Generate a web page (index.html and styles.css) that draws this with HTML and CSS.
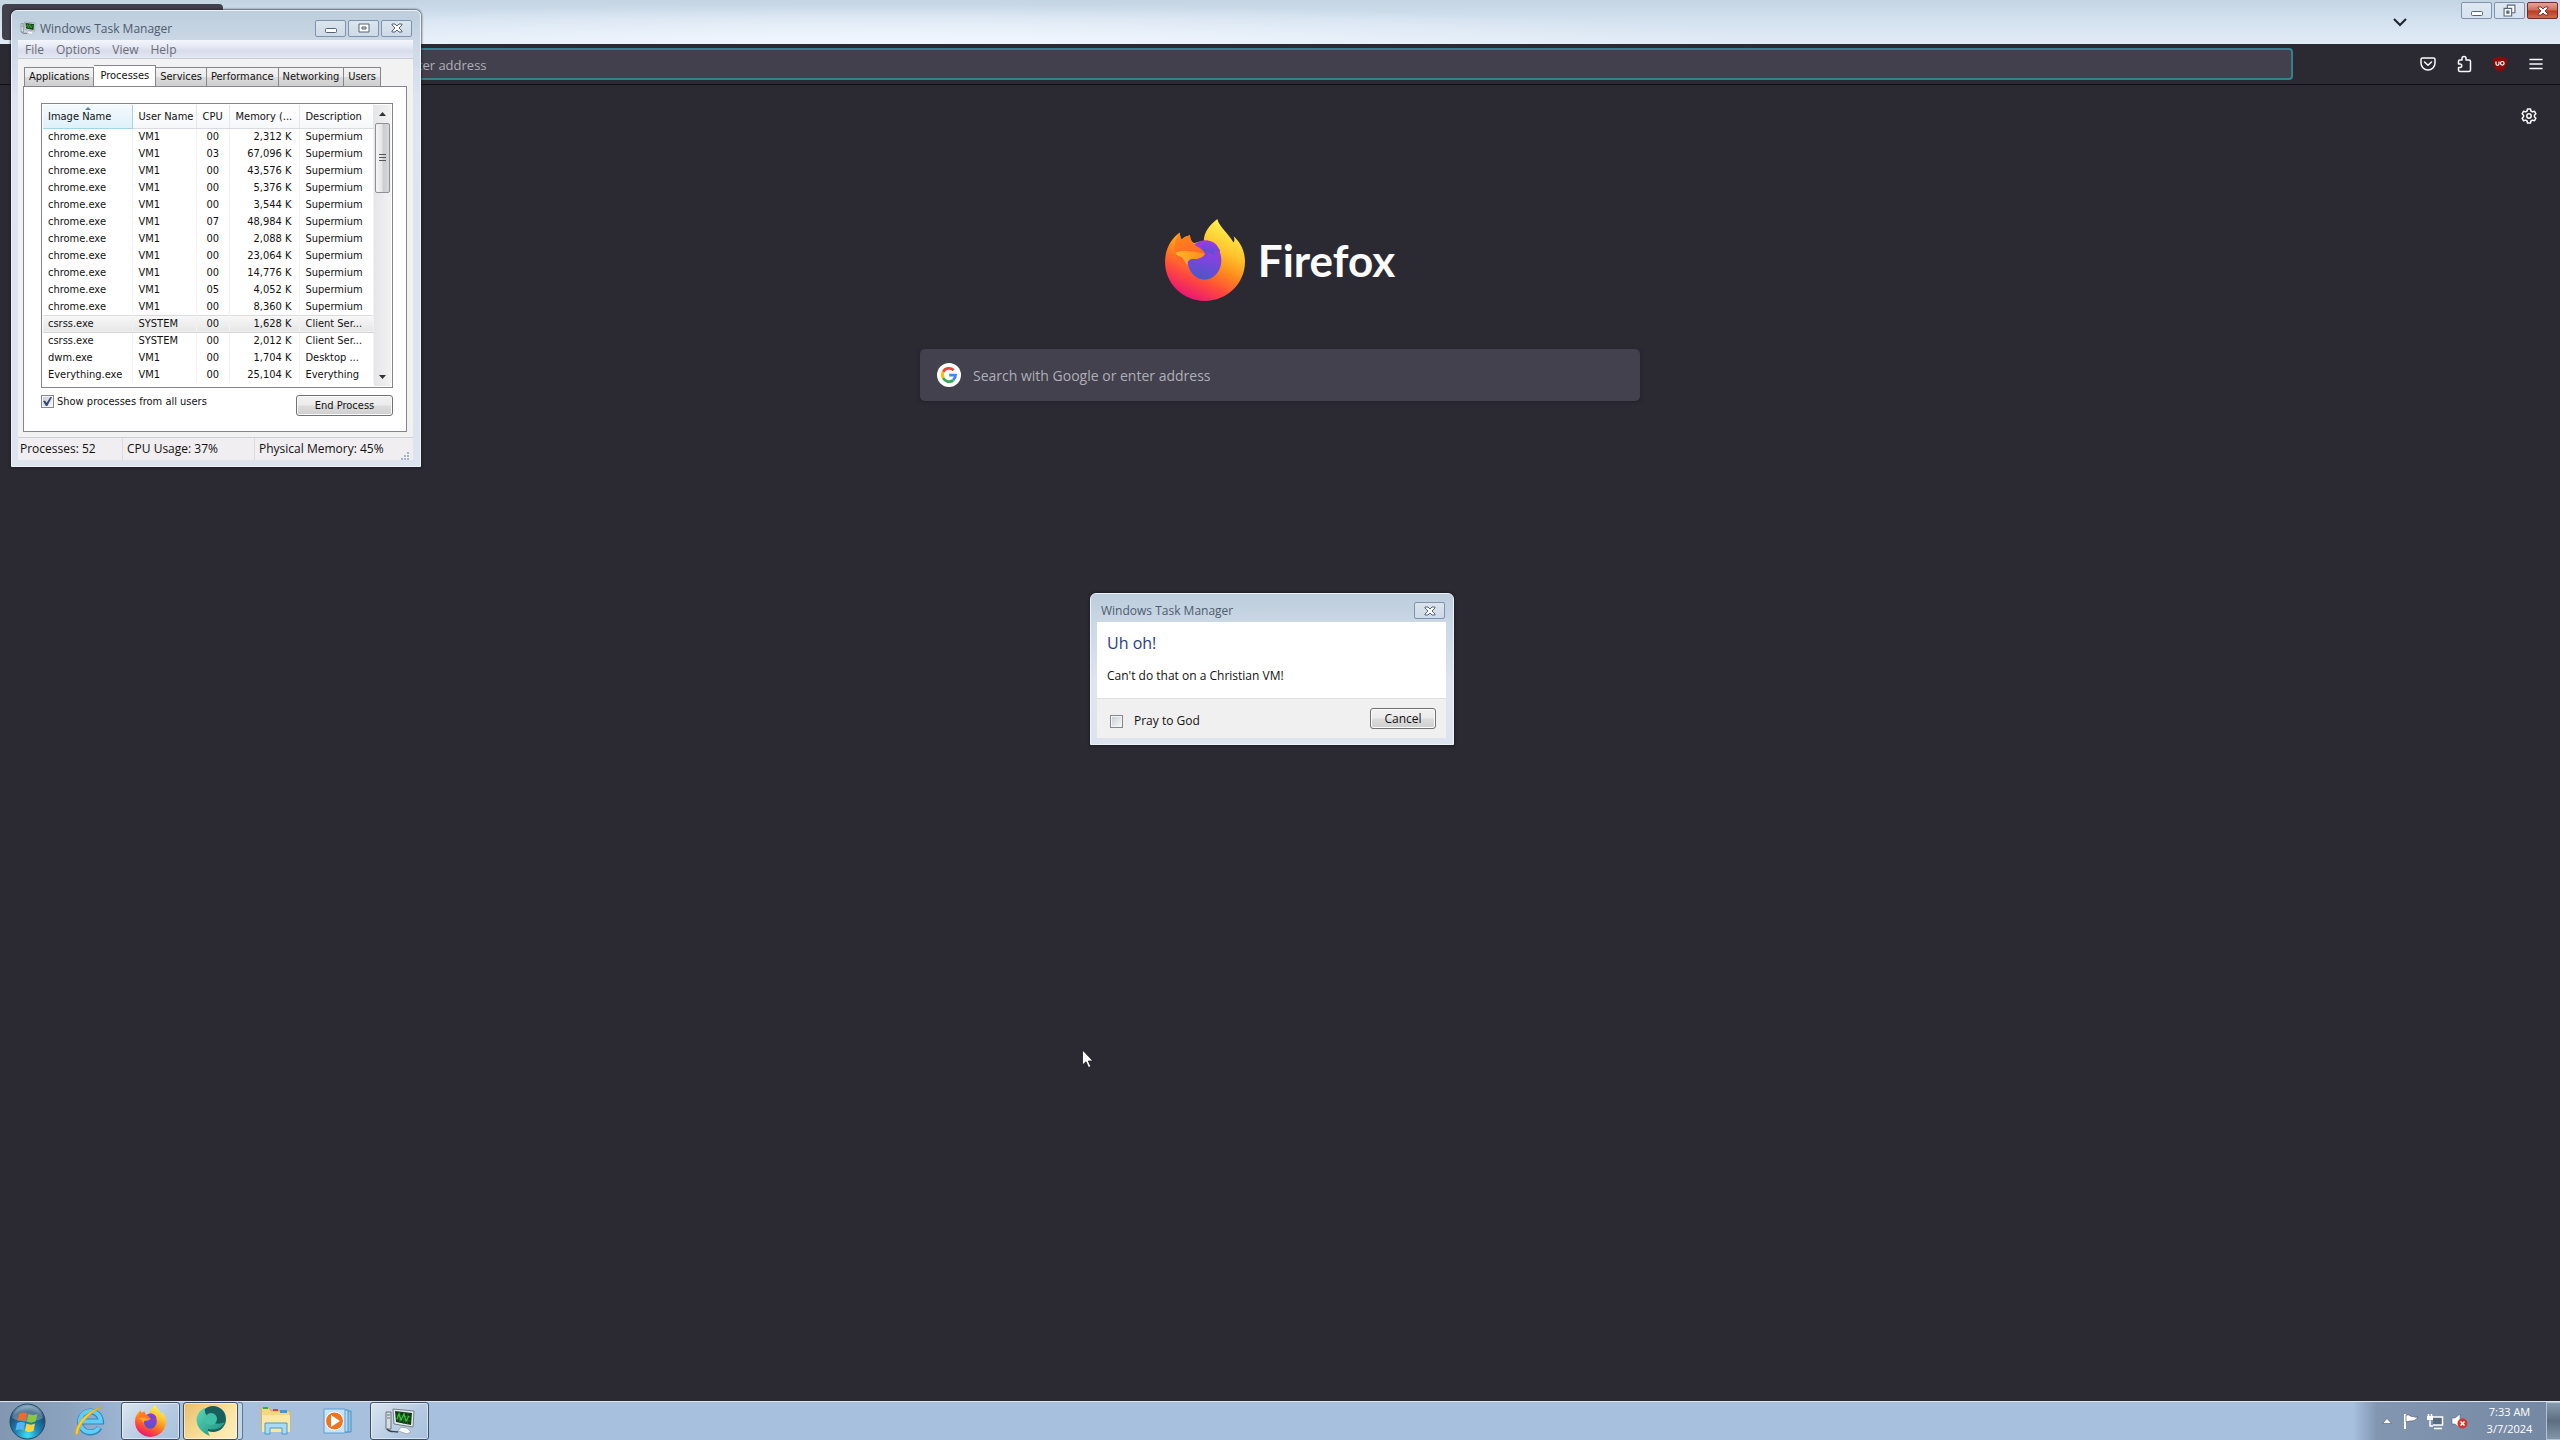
FILE: index.html
```html
<!DOCTYPE html>
<html lang="en">
<head>
<meta charset="utf-8">
<title>Desktop</title>
<link rel="stylesheet" href="styles.css">
</head>
<body>
<svg class="defs" aria-hidden="true">
  <defs>
    <linearGradient id="ff-body" x1=".75" y1=".05" x2=".3" y2="1">
      <stop offset="0" stop-color="#fff44f"/><stop offset=".3" stop-color="#ffc22c"/><stop offset=".52" stop-color="#ff8a1c"/><stop offset=".74" stop-color="#ff4a3c"/><stop offset="1" stop-color="#e8107a"/>
    </linearGradient>
    <linearGradient id="ff-globe" x1=".6" y1="0" x2=".4" y2="1">
      <stop offset="0" stop-color="#a63ad8"/><stop offset=".5" stop-color="#7a45dd"/><stop offset="1" stop-color="#4a58c4"/>
    </linearGradient>
    <linearGradient id="ff-head" x1="0" y1="0" x2=".3" y2="1">
      <stop offset="0" stop-color="#ff8a16"/><stop offset="1" stop-color="#ff5f2c"/>
    </linearGradient>
    <linearGradient id="ff-snout" x1="0" y1="0" x2="1" y2="0">
      <stop offset="0" stop-color="#ffb52b"/><stop offset="1" stop-color="#ff8c1a"/>
    </linearGradient>
    <radialGradient id="orb" cx=".5" cy=".9" r=".9">
      <stop offset="0" stop-color="#3fe0f4"/><stop offset=".4" stop-color="#1b7fb4"/><stop offset=".75" stop-color="#1c4c74"/><stop offset="1" stop-color="#8fb0c8"/>
    </radialGradient>
    <linearGradient id="teal" x1="0" y1="0" x2="1" y2="1">
      <stop offset="0" stop-color="#5fd8b8"/><stop offset="1" stop-color="#178c7c"/>
    </linearGradient>
    <symbol id="firefox" viewBox="0 0 237 243">
      <path fill="url(#ff-body)" d="M115 68C114 38 133 18 155 0C162 26 188 42 203 70C207 64 206 57 203 51C226 70 237 98 237 127C237 192 184 243 118 243C53 243 0 192 0 127C0 93 15 60 44 40C44 49 46 55 49 61C56 54 64 50 74 48C74 59 79 68 86 72C94 68 104 66 115 68Z"/>
      <ellipse cx="117" cy="122" rx="50" ry="58" fill="url(#ff-globe)"/>
      <path fill="url(#ff-globe)" d="M112 65C130 61 151 69 157 84C162 91 164 94 163 98C151 90 144 94 148 106L108 92Z"/>
      <path fill="url(#ff-head)" d="M44 40C44 49 46 55 49 61C56 54 64 50 74 48C74 62 82 75 97 82C107 88 116 94 118 103C113 115 95 120 81 118C68 121 65 128 68 140C55 136 28 120 30 104C25 90 28 60 44 40Z"/>
      <path fill="url(#ff-snout)" d="M31 100C49 91 84 95 118 103C113 115 95 120 81 118C68 121 65 128 67 138C58 130 57 118 47 112C41 110 33 106 31 100Z"/>
    </symbol>
    <symbol id="monitor" viewBox="0 0 32 28">
      <path d="M2 5h5v17H2z" fill="#d7dde0" stroke="#66757c"/>
      <path d="M3 8h3M3 11h3" stroke="#66757c"/>
      <path d="M9 2l21 2-1 16-19-3z" fill="#e7ecee" stroke="#707d84"/>
      <path d="M11 4l17 2-1 12-15-3z" fill="#123a16"/>
      <path d="M12 8l15 2M12 12l15 2M16 5l-.500 11M20 6l-.500 11M24 6l-.500 11" fill="none" stroke="#23702a" stroke-width=".8"/>
      <path d="M13 12l2-5 2 6 3-6 2 7 3-5" fill="none" stroke="#3ec03b" stroke-width="1.300"/>
      <path d="M17 20l6 1 4 4-4 2-9-3z" fill="#f4f6f7" stroke="#a4adb2"/>
      <path d="M3 22c3 4 7 2 11 3" fill="none" stroke="#39434a" stroke-width="1.3"/>
    </symbol>
    <symbol id="win-close" viewBox="0 0 12 10">
      <path d="M1 1h3l2 2 2-2h3v1L8 5l3 3v1H8L6 7 4 9H1V8l3-3-3-3z" fill="#fff" stroke="currentColor"/>
    </symbol>
    <symbol id="win-min" viewBox="0 0 12 10">
      <rect x=".5" y="5.500" width="11" height="4" rx="1" fill="#fff" stroke="currentColor"/>
    </symbol>
    <symbol id="win-max" viewBox="0 0 12 10">
      <path d="M1 1h10v8H1zM4 4h4v2H4z" fill="#fff" fill-rule="evenodd" stroke="currentColor"/>
    </symbol>
    <symbol id="win-restore" viewBox="0 0 12 12">
      <path d="M4 1h7v7H4z" fill="#fff" stroke="currentColor"/>
      <path d="M1 4h7v7H1zM3.500 6.500h2v2h-2z" fill="#fff" fill-rule="evenodd" stroke="currentColor"/>
    </symbol>
  </defs>
</svg>

<div class="desktop">
  <main class="browser">
    <div class="titlebar">
      <button class="tab-current" aria-label="New Tab"></button>
      <button class="list-tabs" aria-label="List all tabs"><svg width="14" height="9" viewBox="0 0 14 9"><path d="M1 1l6 6 6-6" fill="none" stroke="#1d2430" stroke-width="2"/></svg></button>
      <div class="caption-buttons">
        <button class="caption" aria-label="Minimize"><svg width="12" height="10"><use href="#win-min"/></svg></button>
        <button class="caption" aria-label="Restore"><svg width="13" height="13"><use href="#win-restore"/></svg></button>
        <button class="caption caption-close" aria-label="Close"><svg width="12" height="10"><use href="#win-close"/></svg></button>
      </div>
    </div>
    <div class="toolbar">
      <input class="urlbar" type="text" aria-label="Address" placeholder="Search with Google or enter address">
      <div class="toolbar-actions">
        <button class="tool" aria-label="Save to Pocket"><svg width="16" height="16" viewBox="0 0 16 16" fill="none" stroke="#fbfbfe" stroke-width="1.500" stroke-linecap="round" stroke-linejoin="round"><path d="M2.500 2h11A1.500 1.500 0 0 1 15 3.500V7A7 7 0 0 1 1 7V3.500A1.500 1.500 0 0 1 2.500 2zM4.500 6L8 9.300 11.500 6"/></svg></button>
        <button class="tool" aria-label="Extensions"><svg width="16" height="18" viewBox="0 0 16 18" fill="none" stroke="#fbfbfe" stroke-width="1.500" stroke-linejoin="round"><path d="M6 5V3.500a2 2 0 0 1 4 0V5h3a1.500 1.500 0 0 1 1.500 1.500V15a1.500 1.500 0 0 1-1.500 1.500H4A1.500 1.500 0 0 1 2.500 15v-2.500H4a1.700 1.700 0 0 0 0-3.500H2.500V6.500A1.500 1.500 0 0 1 4 5z"/></svg></button>
        <button class="tool" aria-label="uBlock Origin"><svg width="16" height="16" viewBox="0 0 16 16"><path d="M8 0c2 1.500 4.500 2 7 2 0 6 0 10-7 14C1 12 1 8 1 2c2.500 0 5-.500 7-2z" fill="#8c0a0a"/><path d="M4 5.500v2.300a1.500 1.500 0 0 0 3 0V5.500" fill="none" stroke="#fff" stroke-width="1.200"/><circle cx="10.300" cy="7.300" r="1.800" fill="none" stroke="#fff" stroke-width="1.200"/></svg></button>
        <button class="tool" aria-label="Menu"><svg width="14" height="12" viewBox="0 0 14 12" stroke="#fbfbfe" stroke-width="1.500" stroke-linecap="round"><path d="M1 1.500h12M1 6h12M1 10.500h12"/></svg></button>
      </div>
    </div>
    <section class="newtab">
      <button class="tool customize" aria-label="Customize"><svg width="16" height="16" viewBox="0 0 16 16" fill="none" stroke="#fbfbfe" stroke-width="1.500" stroke-linejoin="round"><path d="M6.500 1h3l.400 2 1.500.900 2-.700 1.500 2.600L13.400 7.200v1.600l1.500 1.400-1.500 2.600-2-.700-1.500.900-.400 2h-3l-.400-2-1.500-.900-2 .700-1.500-2.600 1.500-1.400V7.200L1.100 5.800l1.500-2.600 2 .700L6.100 3z"/><circle cx="8" cy="8" r="2.200"/></svg></button>
      <div class="brand">
        <svg width="80" height="82"><use href="#firefox"/></svg>
        <h1 class="wordmark">Firefox</h1>
      </div>
      <label class="search">
        <svg width="24" height="24" viewBox="0 0 24 24"><circle cx="12" cy="12" r="12" fill="#fff"/><g fill="none" stroke-width="2.800"><path d="M16.600 7.200A6.600 6.600 0 0 0 6.200 8.800" stroke="#ea4335"/><path d="M6.200 8.800a6.600 6.600 0 0 0 0 6.400" stroke="#fbbc05"/><path d="M6.200 15.200a6.600 6.600 0 0 0 10 1.900" stroke="#34a853"/><path d="M16.200 17.100A6.600 6.600 0 0 0 18.500 12.100H12.200" stroke="#4285f4"/></g></svg>
        <input class="search-input" type="text" aria-label="Search" placeholder="Search with Google or enter address">
      </label>
    </section>
  </main>

  <footer class="taskbar">
    <nav class="launchers">
      <button class="launch start" aria-label="Start"><svg width="37" height="37" viewBox="0 0 37 37"><circle cx="18.500" cy="18.500" r="17.500" fill="url(#orb)" stroke="#25455e"/><path d="M3 15a16 16 0 0 1 31 0c-9 5-21 5-31 0z" fill="#fff" opacity=".25"/><path d="M10 11c3-2 6-2 8-.500l-1.500 7.500c-3-1.500-5-1.500-8 0z" fill="#f06a28"/><path d="M19.500 11c3 1.500 5 1.500 9 0L26.500 18.500c-3 1.500-6 1.500-8.500 0z" fill="#8cc63e"/><path d="M8 20c3-1.500 5-1.500 8 0l-1.500 7.500c-3-1.500-5-1.500-8 0z" fill="#54b4f0"/><path d="M17.500 20.500c3 1.500 6 1.500 8.500 0L24.500 28c-3 1.500-6 1.500-8.500 0z" fill="#fcd53c"/></svg></button>
      <button class="launch" aria-label="Internet Explorer"><svg width="32" height="32" viewBox="0 0 32 32"><path d="M26.500 22.500a10.500 10.500 0 1 1 1.500-6H9.500" fill="none" stroke="#2a86c4" stroke-width="6"/><path d="M26 22.500a10.500 10.500 0 1 1 1.800-6H10" fill="none" stroke="#62cdf3" stroke-width="4"/><path d="M3 30C0 22 14 4 30 2c-11 4-24 16-25 27z" fill="#f8cf3a" stroke="#d9a520" stroke-width=".8"/></svg></button>
      <button class="launch running" aria-label="Firefox"><svg width="31" height="32"><use href="#firefox"/></svg></button>
      <button class="launch running attention" aria-label="Supermium"><svg width="34" height="32" viewBox="0 0 34 32"><circle cx="19" cy="14" r="13" fill="#17605e"/><path d="M11 3C0 7-2 24 16 31c-2-3-2-5-2-7 8 2 14-1 17-7-6 3-12 2-16-3-3-4-5-7-4-11z" fill="url(#teal)"/><circle cx="17" cy="14" r="6" fill="#3fbfa6"/></svg></button>
      <span class="stack-edge"></span>
      <button class="launch" aria-label="Windows Explorer"><svg width="32" height="30" viewBox="0 0 32 30"><path d="M1 2h8l2 3h19v20H2z" fill="#f4d780" stroke="#d8b04c"/><path d="M3 1h5v2H3z" fill="#3faa3c"/><path d="M13 3h5v2h-5z" fill="#c94a3a"/><path d="M20 4h7v3h-7z" fill="#4c93d6"/><path d="M2 9h28v17H2z" fill="#fae9a4"/><path d="M5 28V17h22v11h-5v-6H10v6z" fill="#a9dbf5" stroke="#4b9ccb"/></svg></button>
      <button class="launch" aria-label="Windows Media Player"><svg width="30" height="26" viewBox="0 0 30 26"><path d="M7 3h21v21H7z" fill="#8ec4ea" stroke="#4a91c6"/><path d="M4 2h21v22H4z" fill="#b9dcf4" stroke="#4a91c6"/><path d="M1 1h21v24H1z" fill="#c9e3f5" stroke="#5aa0d0"/><circle cx="11.500" cy="13" r="9" fill="#ee7420" stroke="#fff"/><path d="M8 7l9 6-9 6z" fill="#fff"/></svg></button>
      <button class="launch running" aria-label="Windows Task Manager"><svg width="32" height="28"><use href="#monitor"/></svg></button>
    </nav>
    <div class="tray">
      <button class="tray-icon" aria-label="Show hidden icons"><svg width="10" height="6" viewBox="0 0 10 6"><path d="M5 .500L9.500 5.500h-9z" fill="#fff" stroke="#4b5b70" stroke-width=".6"/></svg></button>
      <button class="tray-icon" aria-label="Action Center"><svg width="16" height="16" viewBox="0 0 16 16"><path d="M2 1v15" stroke="#fff" stroke-width="2"/><path d="M3 2c4-1 4 2 7 1.500 1 0 1 1 5 .500-2 3-4 4-6 4-2 0-3 0-6 1z" fill="#fff" stroke="#3c4a5e" stroke-width=".6"/></svg></button>
      <button class="tray-icon" aria-label="Network"><svg width="17" height="17" viewBox="0 0 17 17"><path d="M6 4h9.500v8H6" fill="#566a84" stroke="#fff" stroke-width="1.500"/><path d="M7 15.500h8M3 8v5h3M1.500 1v3M4.500 1v3" fill="none" stroke="#fff" stroke-width="1.500"/><path d="M0 3h6v4H4L3 8 2 7H0z" fill="#fff"/></svg></button>
      <button class="tray-icon" aria-label="Volume muted"><svg width="17" height="16" viewBox="0 0 17 16"><path d="M1 5h3l5-4v14l-5-4H1z" fill="#fff" stroke="#5a6676" stroke-width=".6"/><circle cx="11.500" cy="10.500" r="5" fill="#d2352c"/><path d="M9.500 8.500l4 4m0-4l-4 4" stroke="#fff" stroke-width="1.500"/></svg></button>
      <div class="clock"><time>7:33 AM</time><time>3/7/2024</time></div>
      <button class="show-desktop" aria-label="Show desktop"></button>
    </div>
  </footer>

  <section class="window task-manager" aria-label="Windows Task Manager">
    <header class="window-title">
      <svg width="16" height="14"><use href="#monitor"/></svg>
      <h2 class="window-name">Windows Task Manager</h2>
      <div class="caption-buttons">
        <button class="caption" aria-label="Minimize"><svg width="12" height="10"><use href="#win-min"/></svg></button>
        <button class="caption" aria-label="Maximize"><svg width="12" height="10"><use href="#win-max"/></svg></button>
        <button class="caption" aria-label="Close"><svg width="12" height="10"><use href="#win-close"/></svg></button>
      </div>
    </header>
    <div class="tm-body">
      <nav class="menu">
        <button class="menu-item">File</button>
        <button class="menu-item">Options</button>
        <button class="menu-item">View</button>
        <button class="menu-item">Help</button>
      </nav>
      <div class="tabs" role="tablist">
        <button class="tab" role="tab">Applications</button>
        <button class="tab selected" role="tab" aria-selected="true">Processes</button>
        <button class="tab" role="tab">Services</button>
        <button class="tab" role="tab">Performance</button>
        <button class="tab" role="tab">Networking</button>
        <button class="tab" role="tab">Users</button>
      </div>
      <div class="panel">
        <div class="list">
          <table class="processes">
            <colgroup><col class="col-image"><col class="col-user"><col class="col-cpu"><col class="col-memory"><col class="col-description"></colgroup>
            <thead><tr><th class="sorted">Image Name</th><th>User Name</th><th>CPU</th><th>Memory (...</th><th>Description</th></tr></thead>
            <tbody>
              <tr><td>chrome.exe</td><td>VM1</td><td>00</td><td>2,312 K</td><td>Supermium</td></tr>
              <tr><td>chrome.exe</td><td>VM1</td><td>03</td><td>67,096 K</td><td>Supermium</td></tr>
              <tr><td>chrome.exe</td><td>VM1</td><td>00</td><td>43,576 K</td><td>Supermium</td></tr>
              <tr><td>chrome.exe</td><td>VM1</td><td>00</td><td>5,376 K</td><td>Supermium</td></tr>
              <tr><td>chrome.exe</td><td>VM1</td><td>00</td><td>3,544 K</td><td>Supermium</td></tr>
              <tr><td>chrome.exe</td><td>VM1</td><td>07</td><td>48,984 K</td><td>Supermium</td></tr>
              <tr><td>chrome.exe</td><td>VM1</td><td>00</td><td>2,088 K</td><td>Supermium</td></tr>
              <tr><td>chrome.exe</td><td>VM1</td><td>00</td><td>23,064 K</td><td>Supermium</td></tr>
              <tr><td>chrome.exe</td><td>VM1</td><td>00</td><td>14,776 K</td><td>Supermium</td></tr>
              <tr><td>chrome.exe</td><td>VM1</td><td>05</td><td>4,052 K</td><td>Supermium</td></tr>
              <tr><td>chrome.exe</td><td>VM1</td><td>00</td><td>8,360 K</td><td>Supermium</td></tr>
              <tr class="current"><td>csrss.exe</td><td>SYSTEM</td><td>00</td><td>1,628 K</td><td>Client Ser...</td></tr>
              <tr><td>csrss.exe</td><td>SYSTEM</td><td>00</td><td>2,012 K</td><td>Client Ser...</td></tr>
              <tr><td>dwm.exe</td><td>VM1</td><td>00</td><td>1,704 K</td><td>Desktop ...</td></tr>
              <tr><td>Everything.exe</td><td>VM1</td><td>00</td><td>25,104 K</td><td>Everything</td></tr>
            </tbody>
          </table>
          <div class="scrollbar">
            <svg class="arrow" width="7" height="4"><path d="M0 4L3.500 0 7 4z" fill="#333"/></svg>
            <div class="thumb"><svg width="7" height="8" stroke="#555"><path d="M0 .500h7M0 3.500h7M0 6.500h7"/></svg></div>
            <svg class="arrow" width="7" height="4"><path d="M0 0h7L3.500 4z" fill="#333"/></svg>
          </div>
        </div>
        <div class="panel-actions">
          <label class="check"><input type="checkbox" checked>Show processes from all users</label>
          <button class="push">End Process</button>
        </div>
      </div>
      <div class="status">
        <span class="status-part">Processes: 52</span>
        <span class="status-part">CPU Usage: 37%</span>
        <span class="status-part">Physical Memory: 45%</span>
        <svg width="8" height="8" fill="#a8b4c8"><path d="M6 0h2v2H6zM3 3h2v2H3zM6 3h2v2H6zM0 6h2v2H0zM3 6h2v2H3zM6 6h2v2H6z"/></svg>
      </div>
    </div>
  </section>

  <section class="window dialog" role="dialog" aria-label="Windows Task Manager">
    <header class="window-title">
      <h2 class="window-name">Windows Task Manager</h2>
      <div class="caption-buttons">
        <button class="caption" aria-label="Close"><svg width="12" height="10"><use href="#win-close"/></svg></button>
      </div>
    </header>
    <div class="message">
      <h3 class="message-title">Uh oh!</h3>
      <p class="message-text">Can't do that on a Christian VM!</p>
    </div>
    <div class="dialog-actions">
      <label class="check"><input type="checkbox">Pray to God</label>
      <button class="push">Cancel</button>
    </div>
  </section>

  <svg class="cursor" width="13" height="20" viewBox="0 0 13 20"><path d="M.500 1v15l3.500-3.200 2.500 5.700 2.300-1-2.500-5.500H11z" fill="#fff" stroke="#16161c" stroke-width=".8"/></svg>
</div>
</body>
</html>
```
FILE: styles.css
```css
* {
  box-sizing: border-box;
}

body {
  margin: 0;
  font-family: "Open Sans", "Noto Sans", sans-serif;
  font-size: 12px;
  line-height: 16px;
  color: #111;
}

button,
input {
  margin: 0;
  padding: 0;
  border: 0;
  background: none;
  font: inherit;
  color: inherit;
}

h1, h2, h3, p {
  margin: 0;
  font-weight: 400;
}

svg {
  display: block;
  flex: none;
}

.defs {
  position: absolute;
  width: 0;
  height: 0;
}

.desktop {
  position: relative;
  display: flex;
  flex-direction: column;
  min-height: 100vh;
  overflow: hidden;
  background: #2b2a33;
}

/* Browser */

.browser {
  flex: 1;
  display: flex;
  flex-direction: column;
}

.titlebar {
  display: flex;
  align-items: flex-start;
  height: 44px;
  padding: 2px 2px 0;
  background:
    radial-gradient(ellipse 34% 90% at 35% 100%, #f2f7ff 0%, rgba(242, 247, 255, 0) 100%),
    linear-gradient(#c3d4e3, #d3e1ef 45%, #e1ebf6);
}

.tab-current {
  width: 221px;
  height: 36px;
  margin: 2px auto 0 0;
  border-radius: 4px;
  background: #42404d;
}

.list-tabs {
  margin: 16px 54px 0 0;
}

.caption-buttons {
  display: flex;
  gap: 2px;
}

.caption {
  display: flex;
  align-items: center;
  justify-content: center;
  width: 31px;
  height: 17px;
  border: 1px solid #7f93b0;
  border-radius: 2px;
  background: linear-gradient(rgba(255, 255, 255, .45), rgba(255, 255, 255, .1));
  color: #55637a;
}

.caption-close {
  border-color: #6b2b2b;
  background: linear-gradient(#e3a598, #cf6b58 48%, #b93a22 52%, #d2694e);
  color: #7a3a34;
}

.toolbar {
  display: flex;
  align-items: center;
  height: 41px;
  padding: 0 6px 0 225px;
  border-bottom: 1px solid #0e0e14;
  background: #2b2a33;
}

.urlbar {
  flex: 1;
  height: 32px;
  margin-right: 117px;
  padding: 2px 39px 0;
  border: 2px solid #34808c;
  border-radius: 4px;
  background: #42404d;
  font-size: 13px;
}

::placeholder {
  color: #b0afb8;
  opacity: 1;
}

.toolbar-actions {
  display: flex;
}

.tool {
  display: flex;
  align-items: center;
  justify-content: center;
  width: 36px;
  height: 32px;
}

.newtab {
  display: flex;
  flex-direction: column;
  align-items: center;
  padding: 15px 13px;
}

.customize {
  align-self: flex-end;
}

.brand {
  display: flex;
  align-items: center;
  gap: 13px;
  margin-top: 87px;
}

.wordmark {
  font-family: Lato, sans-serif;
  font-size: 44px;
  font-weight: 700;
  line-height: 48px;
  color: #fbfbfe;
}

.search {
  display: flex;
  align-items: center;
  gap: 12px;
  width: 720px;
  max-width: 100%;
  height: 52px;
  margin-top: 48px;
  padding: 0 17px;
  border-radius: 5px;
  background: #42414d;
  box-shadow: 0 1px 4px rgba(20, 18, 28, .4);
}

.search-input {
  flex: 1;
  padding-top: 2px;
  font-size: 14px;
  line-height: 20px;
}

/* Taskbar */

.taskbar {
  display: flex;
  justify-content: space-between;
  height: 39px;
  border-top: 1px solid #dce6f0;
  background: linear-gradient(90deg, #8197b2 0, #8ca3bf 70px, #a6c0de 150px);
}

.launchers {
  display: flex;
  align-items: center;
  padding-left: 8px;
}

.launch {
  display: flex;
  align-items: center;
  justify-content: center;
  width: 59px;
  height: 38px;
  margin-right: 3px;
}

.start {
  width: 38px;
  margin-right: 13px;
}

.running {
  border: 1px solid #3d5069;
  border-radius: 3px;
  background: linear-gradient(135deg, #dbe5ef, #b5cae2 60%, #a8c1de);
  box-shadow: inset 0 0 0 1px rgba(255, 255, 255, .5);
}

.attention {
  width: 55px;
  margin-right: 0;
  background: linear-gradient(135deg, #e8bd6c, #fbe3a0 60%, #fdf0bd);
}

.stack-edge {
  width: 5px;
  height: 38px;
  margin-right: 3px;
  border: 1px solid #5f7896;
  border-left: 0;
  border-radius: 0 3px 3px 0;
  background: #c4d5e7;
}

.tray {
  display: flex;
  align-items: center;
  padding-left: 22px;
  background: linear-gradient(90deg, rgba(119, 137, 162, 0), #8296b2 24px, #7487a2);
}

.tray-icon {
  display: flex;
  justify-content: center;
  width: 24px;
}

.clock {
  display: flex;
  flex-direction: column;
  width: 75px;
  padding: 0 0 2px 2px;
  text-align: center;
  font-size: 11px;
  line-height: 17px;
  color: #fff;
}

.show-desktop {
  width: 14px;
  height: 38px;
  border: 1px solid #b3c3d4;
  border-right: 0;
  background: linear-gradient(#8799ad, #5d6e82 50%, #8395a8);
}

/* Aero windows */

.window {
  position: absolute;
  padding: 0 7px 6px 6px;
  border: 1px solid #eef3f8;
  border-radius: 6px 6px 0 0;
  background: linear-gradient(#bccddb, #cbd8e6 30px, #dfe4f0 90px, #dde3ef);
  box-shadow: 0 0 2px 1px rgba(20, 22, 32, .6);
}

.window-title {
  display: flex;
  align-items: center;
  height: 29px;
  padding-top: 5px;
}

.window-title .caption-buttons {
  margin-left: auto;
  padding-right: 1px;
}

.window-name {
  font-size: 12px;
  color: #4c5b6d;
}

.task-manager {
  left: 11px;
  top: 10px;
  width: 410px;
}

.task-manager .window-title {
  gap: 4px;
  padding-left: 2px;
}

.task-manager .window-name {
  padding-top: 2px;
}

.tm-body {
  background: #f3f2f3;
}

.menu {
  display: flex;
  gap: 12px;
  height: 19px;
  padding: 2px 7px 0;
  border-bottom: 1px solid #c9cbd8;
  background: linear-gradient(#f4f6fb, #e4e8f4 40%, #d8dcec 60%, #e4e7f3);
  color: #6b6c73;
}

.tabs {
  display: flex;
  align-items: flex-end;
  padding: 6px 6px 0;
  font-family: "DejaVu Sans Condensed", "DejaVu Sans", sans-serif;
  font-size: 11px;
}

.tab {
  height: 19px;
  padding: 0 4px;
  border: 1px solid #85868c;
  border-bottom: 0;
  border-left-width: 0;
  background: linear-gradient(#f2f2f2, #ebebeb 50%, #dadada 52%, #cfcfcf);
  white-space: nowrap;
}

.tab:first-child {
  border-left-width: 1px;
}

.tab.selected {
  height: 21px;
  padding: 0 6px;
  background: #fff;
}

.panel {
  margin: 0 6px 0 5px;
  padding: 16px 13px 15px 17px;
  border: 1px solid #85868c;
  background: #fff;
  font-family: "DejaVu Sans Condensed", "DejaVu Sans", sans-serif;
  font-size: 11px;
}

.list {
  display: grid;
  grid-template-columns: 1fr 17px;
  padding: 1px;
  border: 1px solid #82858c;
}

.processes {
  width: 100%;
  margin-bottom: 3px;
  border-collapse: collapse;
  table-layout: fixed;
}

.col-image { width: 89px; }
.col-user { width: 64px; }
.col-cpu { width: 33px; }
.col-memory { width: 70px; }

.processes th {
  height: 23px;
  padding: 2px 0 0 6px;
  border-right: 1px solid #e3e8ee;
  border-bottom: 1px solid #d8dce2;
  background: linear-gradient(#fff, #f6f7f9);
  font-weight: 400;
  text-align: left;
  white-space: nowrap;
}

.processes th.sorted {
  position: relative;
  padding-left: 5px;
  border-color: #a5d3e8;
  background: linear-gradient(#f4fafd, #dff1fa);
}

.sorted::before {
  content: "";
  position: absolute;
  top: 2px;
  left: 42px;
  width: 6px;
  height: 3px;
  background: #5a7f96;
  clip-path: polygon(50% 0, 100% 100%, 0 100%);
}

.processes td {
  height: 17px;
  padding: 0 0 0 6px;
  border-right: 1px solid #f2f2f2;
  line-height: 15px;
  white-space: nowrap;
}

.processes td:first-child {
  padding-left: 5px;
}

.processes td:nth-child(3) {
  padding-left: 10px;
}

.processes td:nth-child(4) {
  padding: 0 7px 0 0;
  text-align: right;
}

.current td {
  border-top: 1px solid #dcdcdc;
  border-bottom: 1px solid #d4d4d4;
  background: linear-gradient(#f8f8f8, #e6e6e6);
}

.scrollbar {
  display: flex;
  flex-direction: column;
  align-items: center;
  background: linear-gradient(90deg, #e6e6e8, #f2f2f2);
}

.arrow {
  margin: 7px 0;
}

.thumb {
  display: flex;
  align-items: center;
  justify-content: center;
  width: 15px;
  height: 70px;
  margin-bottom: auto;
  border: 1px solid #8f9096;
  border-radius: 2px;
  background: linear-gradient(90deg, #f5f5f5, #e4e4e6 48%, #cbccd0 52%, #d8d8dc);
}

.panel-actions {
  display: flex;
  justify-content: space-between;
  padding-top: 7px;
}

.check {
  display: flex;
  gap: 3px;
  height: 16px;
}

.panel-actions .check {
  line-height: 14px;
}

.check input {
  appearance: none;
  flex: none;
  width: 13px;
  height: 13px;
  border: 1px solid #85878c;
  background: linear-gradient(135deg, #c6cbd1, #fafafa);
  box-shadow: inset 0 0 0 1px #f4f4f4;
}

.check input:checked::before {
  content: "";
  display: block;
  width: 9px;
  height: 9px;
  margin: 1px;
  background: #3a4874;
  clip-path: polygon(0 45%, 22% 38%, 40% 65%, 82% 0, 100% 0, 48% 100%, 32% 100%);
}

.push {
  width: 97px;
  height: 21px;
  border: 1px solid #707276;
  border-radius: 3px;
  background: linear-gradient(#f2f2f2, #ebebeb 48%, #dcdcdc 52%, #cfcfcf);
  box-shadow: inset 0 0 0 1px #fafafa;
  text-align: center;
}

.status {
  display: grid;
  grid-template-columns: 104px 132px 1fr 12px;
  align-items: end;
  height: 23px;
  margin-top: 5px;
  border-top: 1px solid #cfcfd4;
  background: #f0eef0;
}

.status-part {
  height: 22px;
  padding: 3px 0 0 4px;
  border-left: 1px solid #dcdce0;
}

.status-part:first-child {
  padding-left: 2px;
  border-left: 0;
}

.dialog {
  left: 1090px;
  top: 593px;
  width: 364px;
}

.dialog .window-title {
  height: 28px;
  padding-left: 4px;
}

.message {
  padding: 11px 9px 13px 10px;
  background: #fff;
}

.message-title {
  font-size: 16px;
  line-height: 20px;
  color: #2a3a86;
}

.message-text {
  margin-top: 14px;
  line-height: 18px;
}

.dialog-actions {
  display: flex;
  justify-content: space-between;
  padding: 9px 10px 4px 13px;
  border-top: 1px solid #dfdfdf;
  background: #f0f0f0;
}

.dialog-actions .check {
  gap: 11px;
  align-items: center;
  height: 26px;
}

.dialog-actions .push {
  width: 66px;
}

.cursor {
  position: absolute;
  left: 1082px;
  top: 1049px;
}
```
